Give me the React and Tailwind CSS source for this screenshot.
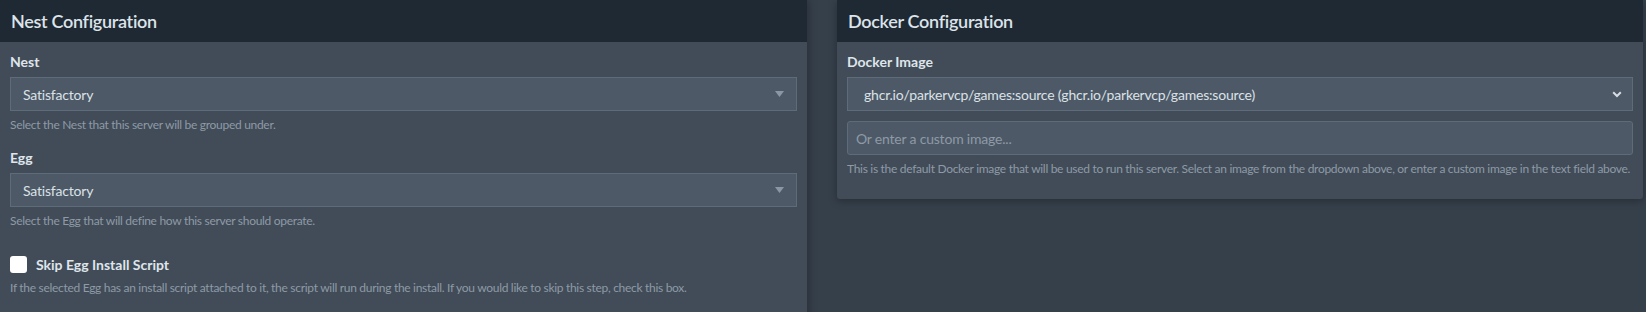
import React from "react";

const font = { fontFamily: "Lato, 'Open Sans', sans-serif" };

function Header({ title }) {
  return (
    <div className="h-[42px] bg-[#1f2933] px-[11px] flex items-center">
      <h3 className="text-[18px] font-semibold text-[#dde3e9] leading-none tracking-[-0.3px]">{title}</h3>
    </div>
  );
}

function Label({ children }) {
  return <div className="text-[14px] font-bold text-[#dfe5eb] leading-[20px] mb-[5px]">{children}</div>;
}

function Help({ children }) {
  return <p className="text-[12px] text-[#8e9aa6] leading-[17px] mt-[5px] tracking-[-0.3px]">{children}</p>;
}

function Select2({ value }) {
  return (
    <div className="h-[34px] bg-[#4d5966] border border-[#5e6b79] pl-3 pr-3 flex items-center justify-between">
      <span className="text-[14px] text-[#dbe1e7] tracking-[-0.2px]">{value}</span>
      <svg width="9" height="6" viewBox="0 0 9 6"><path d="M0 0 L9 0 L4.5 6 Z" fill="#8b97a4" /></svg>
    </div>
  );
}

export default function App() {
  return (
    <div style={font} className="w-[1646px] h-[312px] bg-[#36404b] overflow-hidden flex gap-[30px] items-start">
      <div className="w-[807px] h-[340px] bg-[#414c58] shadow-[2px_0_8px_rgba(0,0,0,0.25)] shrink-0">
        <Header title="Nest Configuration" />
        <div className="p-[10px]">
          <div className="mb-[15px]">
            <Label>Nest</Label>
            <Select2 value="Satisfactory" />
            <Help>Select the Nest that this server will be grouped under.</Help>
          </div>
          <div>
            <Label>Egg</Label>
            <Select2 value="Satisfactory" />
            <Help>Select the Egg that will define how this server should operate.</Help>
          </div>
          <div className="mt-[25px]">
            <div className="flex items-center h-[20px] gap-[9px]">
              <div className="w-[17px] h-[17px] bg-white rounded-[3px]" />
              <span className="text-[14px] font-bold text-[#dfe5eb]">Skip Egg Install Script</span>
            </div>
            <Help>If the selected Egg has an install script attached to it, the script will run during the install. If you would like to skip this step, check this box.</Help>
          </div>
        </div>
      </div>
      <div className="w-[806px] bg-[#414c58] rounded-b-[3px] shadow-[0_2px_8px_rgba(0,0,0,0.3)] shrink-0">
        <Header title="Docker Configuration" />
        <div className="p-[10px] pb-[22px]">
          <Label>Docker Image</Label>
          <div className="h-[34px] bg-[#4d5966] border border-[#5e6b79] pl-4 pr-[10px] flex items-center justify-between">
            <span className="text-[14px] text-[#dbe1e7] tracking-[-0.2px]">ghcr.io/parkervcp/games:source (ghcr.io/parkervcp/games:source)</span>
            <svg width="10" height="7" viewBox="0 0 10 7"><path d="M1.2 1.3 L5 5 L8.8 1.3" fill="none" stroke="#d6dce2" strokeWidth="2" /></svg>
          </div>
          <input
            className="mt-[10px] w-full h-[34px] bg-[#4d5966] border border-[#5e6b79] rounded-[3px] px-2 text-[14px] text-[#dbe1e7] placeholder:text-[#8e9aa6] outline-none tracking-[-0.2px]"
            placeholder="Or enter a custom image..."
          />
          <Help>This is the default Docker image that will be used to run this server. Select an image from the dropdown above, or enter a custom image in the text field above.</Help>
        </div>
      </div>
    </div>
  );
}
